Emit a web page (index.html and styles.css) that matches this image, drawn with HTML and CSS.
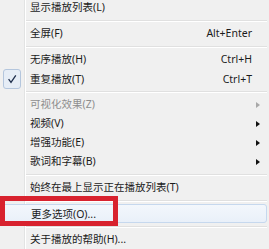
FILE: index.html
```html
<!DOCTYPE html>
<html lang="zh-CN">
<head>
  <meta charset="UTF-8">
  <title>播放菜单</title>
  <link rel="stylesheet" href="styles.css">
</head>
<body>
  <div class="menu">
    <div class="item"><span></span><span class="label">显示播放列表(L)</span><span></span><span></span></div>
    <div class="sep"></div>
    <div class="item"><span></span><span class="label">全屏(F)</span><span class="key">Alt+Enter</span><span></span></div>
    <div class="sep"></div>
    <div class="item"><span></span><span class="label">无序播放(H)</span><span class="key">Ctrl+H</span><span></span></div>
    <div class="item">
      <span class="check">
        <svg width="10" height="10" viewBox="0 0 10 10"><path d="M1.6 5.2 L4 8.3 L8.8 1.4" fill="none" stroke="#1f2f4d" stroke-width="1.3"/></svg>
      </span>
      <span class="label">重复播放(T)</span><span class="key">Ctrl+T</span><span></span>
    </div>
    <div class="sep"></div>
    <div class="item disabled"><span></span><span class="label">可视化效果(Z)</span><span></span><span class="arrow"></span></div>
    <div class="item"><span></span><span class="label">视频(V)</span><span></span><span class="arrow"></span></div>
    <div class="item"><span></span><span class="label">增强功能(E)</span><span></span><span class="arrow"></span></div>
    <div class="item"><span></span><span class="label">歌词和字幕(B)</span><span></span><span class="arrow"></span></div>
    <div class="sep"></div>
    <div class="item"><span></span><span class="label">始终在最上显示正在播放列表(T)</span><span></span><span></span></div>
    <div class="sep"></div>
    <div class="item hover"><span></span><span class="label">更多选项(O)...</span><span></span><span></span></div>
    <div class="sep"></div>
    <div class="item"><span></span><span class="label">关于播放的帮助(H)...</span><span></span><span></span></div>

    <div class="mark"></div>
  </div>
</body>
</html>
```

FILE: styles.css
```css
body {
  margin: 0;
  overflow: hidden;
  font-family: "Noto Sans", "Noto Sans CJK SC", sans-serif;
  font-size: 10.5px;
  color: #1b1b1b;
}

.menu {
  position: relative;
  margin-top: -2px;
  padding-bottom: 4px;
  background:
    linear-gradient(to right, transparent 24px, #e2e3e3 24px, #e2e3e3 25px, #fff 25px, #fff 26px, transparent 26px),
    #f0f0f0;
}

.item {
  display: grid;
  grid-template-columns: 28px 1fr auto 15px;
  align-items: center;
  height: 19px;
  margin: 0 2px;
  line-height: 19px;
  white-space: nowrap;
  box-sizing: border-box;
}

.item.disabled { color: #8e8e8e; }

.item.hover {
  border: 1px solid #c6d8ee;
  border-radius: 3px;
  background: linear-gradient(#f3f7fc, #e9f0f9);
}

.key { text-align: right; }

.check {
  display: flex;
  align-items: center;
  justify-content: center;
  width: 18px;
  height: 20px;
  margin-left: 1px;
  border: 1px solid #b4c6dd;
  border-radius: 3px;
  background: #e6edf6;
  box-sizing: border-box;
}

.check svg { display: block; }

.arrow {
  width: 0;
  height: 0;
  margin-left: 4px;
  border-top: 3.5px solid transparent;
  border-bottom: 3.5px solid transparent;
  border-left: 4px solid #111;
}

.disabled .arrow { border-left-color: #a8a8a8; }

.sep {
  display: flex;
  align-items: center;
  height: 7px;
  padding-left: 26px;
  padding-right: 2px;
}

.sep::before {
  content: "";
  flex: 1;
  height: 1px;
  border-top: 1px solid #e0e0e0;
  background: #fff;
}

/* red annotation frame drawn over the menu */
.mark {
  position: absolute;
  left: 0;
  top: 198px;
  width: 118px;
  height: 30px;
  border: 5px solid #d8222e;
  box-sizing: border-box;
}
```
